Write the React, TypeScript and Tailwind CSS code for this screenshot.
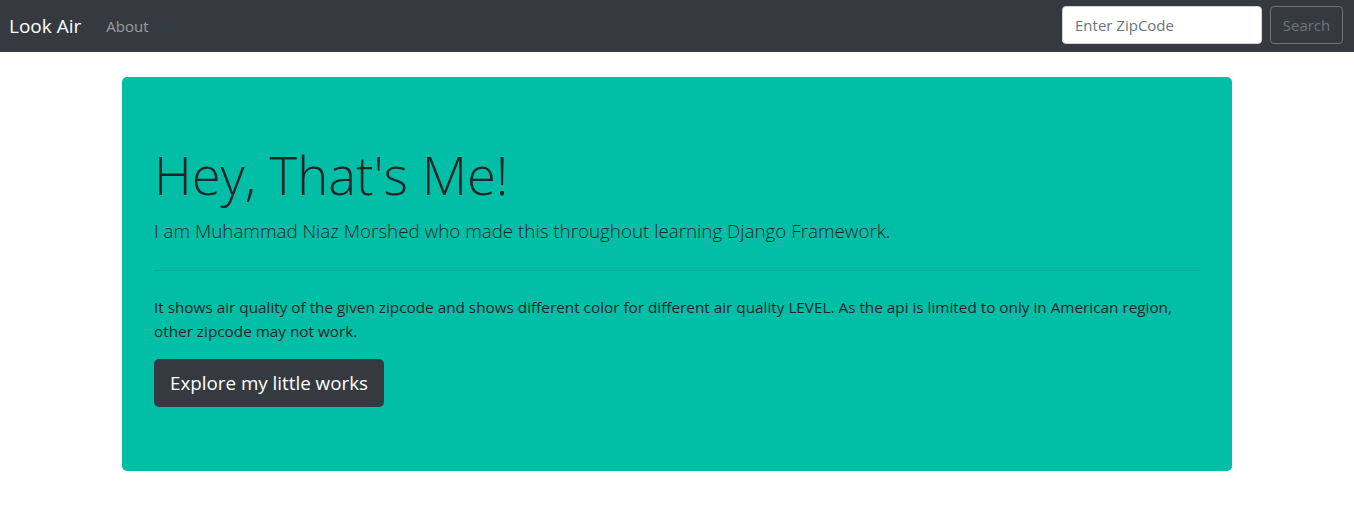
import React from 'react';

const font = { fontFamily: '"Open Sans", "Noto Sans", sans-serif' };

export default function App() {
  return (
    <div className="min-h-screen bg-white text-[#212529]" style={font}>
      {/* navbar */}
      <nav className="flex h-[52px] items-center justify-between bg-[#343a40] pl-[9px] pr-[11px]">
        <div className="flex items-center">
          <a className="text-[19px] leading-[30px] text-white">Look Air</a>
          <a className="ml-[25px] text-[15px] text-white/50">About</a>
        </div>
        <form className="mb-[2px] flex items-center gap-[8px]" onSubmit={(e) => e.preventDefault()}>
          <input
            className="h-[38px] w-[200px] rounded-[4px] border border-[#ced4da] bg-white px-[12px] text-[15px] text-[#495057] placeholder:text-[#6c757d] focus:outline-none"
            placeholder="Enter ZipCode"
          />
          <button className="h-[38px] w-[73px] rounded-[4px] border border-[#6c757d] text-[15px] text-[#6c757d]">
            Search
          </button>
        </form>
      </nav>

      {/* jumbotron */}
      <div className="mx-auto mt-[25px] w-[1110px]">
        <div className="rounded-[5px] bg-[#00bfa6] px-[32px] py-[64px]">
          <h1 className="mb-[8px] text-[52.5px] font-light leading-[67px]">Hey, That's Me!</h1>
          <p className="text-[18.8px] font-light leading-[30px]">
            I am Muhammad Niaz Morshed who made this throughout learning Django Framework.
          </p>
          <hr className="my-[24px] border-0 border-t border-black/10" />
          <p className="mb-[16px] text-[15.3px] leading-[24px]">
            It shows air quality of the given zipcode and shows different color for different air quality LEVEL. As the api is limited to only in American region, other zipcode may not work.
          </p>
          <button className="h-[48px] rounded-[5px] bg-[#343a40] px-[16px] text-[18.8px] text-white">
            Explore my little works
          </button>
        </div>
      </div>
    </div>
  );
}
